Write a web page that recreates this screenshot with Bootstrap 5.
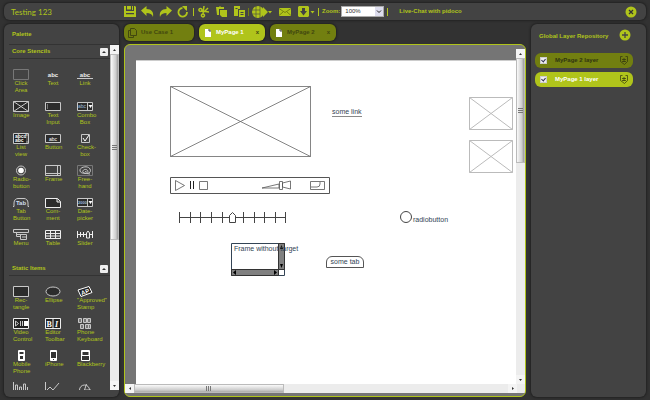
<!DOCTYPE html>
<html lang="en">
<head>
<meta charset="utf-8">
<meta name="viewport" content="width=device-width, initial-scale=1">
<title>Testing 123</title>
<link href="https://cdn.jsdelivr.net/npm/bootstrap@5.3.0/dist/css/bootstrap.min.css" rel="stylesheet">
<style>
:root{--lime:#b0c41b;--olive:#727f10;--panel:#434343}
body{font:6px/7px "Liberation Sans",Arial,sans-serif;background:#323232;color:var(--lime);padding:3px 4px;height:100vh;gap:4px;overflow:hidden}
button,select,input{font:inherit;color:inherit}
button{background:none;border:0;padding:0}
svg{display:block;fill:none;stroke:currentColor}
.panel{background:var(--panel);border-radius:6px;box-shadow:0 0 2px 1px #222}
.topbar{height:17px;padding:0 9px 0 7px}
.app-title{font:8px/10px Lato,sans-serif;width:113px}
.tools{gap:5px}
.tools-wide{gap:7px}
.tool svg{fill:currentColor;stroke:none}
.sep{width:1px;height:8px;background:var(--olive);margin:0 4px}
.sep.lit{background:var(--lime)}
.sep.tight{margin:0 3px}
.zoom-box{width:43px;height:11px;background:#fff;color:#333;border:1px solid #aaa;appearance:none;padding:0 3px}
.zoom-wrap{position:relative;margin-left:1px}
.zoom-wrap span{position:absolute;right:1px;top:1px;width:8px;height:9px;background:#dde;color:#222;pointer-events:none}
.chat{color:var(--lime);margin-left:8px}
.side{width:115px}
.palette-head{height:21px;padding:0 8px;margin-left:5px;padding-left:3px;border-bottom:1px solid #333}
.sect{height:14px;margin-left:5px;padding:0 2px 0 3px;border-bottom:1px solid #333}
.collapse-btn{width:8px;height:8px;background:#eee;border-radius:1px;color:#333}
.stencils{display:grid;grid-template-columns:repeat(3,16px);column-gap:16px;row-gap:7px;padding:10px 0 8px 9px}
.stencil{display:flex;flex-direction:column;justify-content:flex-start;width:16px;height:25px;text-align:center}
.stencil svg{flex:none;width:16px;height:11px;color:#c8c8c8}
.stencil span{display:block;width:16px}
.palette-body{margin-bottom:7px}
.vbar{width:9px;background:#ececec}
.arrow{width:9px;height:9px;color:#333;background:#f4f4f4}
.arrow svg,.collapse-btn svg{fill:currentColor;stroke:none}
.vthumb{background:linear-gradient(90deg,#fafafa,#ccc 70%,#999);border:1px solid #bbb}
.vthumb.t1{height:57%}
.vthumb.t2{height:33%}
.hbar{height:9px;background:#ececec}
.hthumb{width:40%;background:linear-gradient(#fafafa,#ccc 70%,#aaa);border:1px solid #bbb}
.grip{color:#777;width:5px;height:5px}
.workspace{gap:3px;margin:0 5px}
.page-tabs{gap:5px}
.page-tab{height:17px;width:66px;border-radius:6px;background:var(--olive);color:#42480f;padding:0 6px;box-shadow:0 0 2px 1px #222}
.page-tab.wide{width:70px;padding-left:4px}
.page-tab.active,.layer.active{background:var(--lime);color:#fff}
.page-tab .x{color:#42480f}
.board{background:#757575;border:1px solid var(--lime);border-radius:6px;padding-bottom:3px}
.view{padding:15px 0 0 11px}
.sheet{background:#fff;color:#345;font-size:7px;line-height:8px;border-top:1px solid #ccc}
.sheet>*{position:absolute}
.p-image{left:34px;top:25px}
.p-link{left:196px;top:47px;color:#345;text-decoration:none;border-bottom:1px solid #888}
.p-thumb1{left:333px;top:36px;color:#bbb}
.p-thumb2{left:333px;top:79px;color:#bbb}
.p-video{left:34px;top:116px}
.p-slider{left:43px;top:150px;color:#444}
.p-frame{left:95px;top:182px}
.p-frametext{left:98px;top:184px}
.p-tab{left:190px;top:195px;width:38px;height:12px;border:1px solid #555;border-radius:6px 6px 0 0}
.p-radio{left:264px;top:150px;gap:1px}
.p-radio input{appearance:none;width:12px;height:12px;border:1px solid #444;border-radius:50%;margin:0}
.p-radio span{padding-top:5px}
.layers-head{padding:5px 15px 0 8px;height:29px}
.layer-list{padding:0 13px 0 4px;gap:4px}
.layer{height:15px;border-radius:6px;background:var(--olive);color:#30340f;padding:0 5px}
.layer input{appearance:none;width:7px;height:7px;background:#eee;border:1px solid #ccc;margin:0;position:relative}
.layer input:checked::after{content:"";position:absolute;left:1px;top:0;width:3px;height:4px;border:solid #335;border-width:0 1px 1px 0;transform:rotate(40deg)}
.layer label{margin-left:8px}
.layer svg{color:#30340f}
</style>
</head>
<body class="d-flex flex-column">
<header class="panel topbar d-flex align-items-center flex-shrink-0">
  <div class="app-title flex-shrink-0">Testing 123</div>
  <div class="d-flex align-items-center tools">
    <button class="tool" aria-label="Save"><svg width="12" height="12" viewBox="0 0 12 12"><path fill-rule="evenodd" d="M0 0h2v5h8V0h1l1 1v10H0zM3 0h4v3.500H3zM8 0h1v4H8zM2 7v1.200h8V7z"/></svg></button>
    <button class="tool" aria-label="Undo"><svg width="13" height="12" viewBox="0 0 13 12"><path d="M0 4.500 5.500 0v3c5 0 7.500 3 6.500 8-1-3-3-4-6.500-4v3z"/></svg></button>
    <button class="tool" aria-label="Redo"><svg width="13" height="12" viewBox="0 0 13 12"><path d="M13 4.500 7.500 0v3C2.500 3 0 6 1 11c1-3 3-4 6.500-4v3z"/></svg></button>
    <button class="tool" aria-label="Refresh"><svg width="12" height="12" viewBox="0 0 12 12"><path d="M5.500 2a4.300 4.300 0 1 0 4.500 4" style="fill:none;stroke:currentColor;stroke-width:1.800"/><path d="M5 0h5v5L8.200 3.500z"/></svg></button>
  </div>
  <div class="sep lit"></div>
  <div class="d-flex align-items-center tools-wide">
    <button class="tool" aria-label="Cut"><svg width="11" height="12" viewBox="0 0 11 12"><path style="fill:none;stroke:currentColor;stroke-width:1.500" d="M2.500 5.500a1.500 1.500 0 1 0-.1 0zM5 11a1.500 1.500 0 1 0-.1 0zM3.500 5 11 6M5 8l1-8M6 6l4-4"/></svg></button>
    <button class="tool" aria-label="Copy"><svg width="11" height="12" viewBox="0 0 11 12"><path d="M0 1h3l1-1 1 1h3v2H3v6H1z"/><path d="M4 4h7v7H6L4 9z"/></svg></button>
    <button class="tool" aria-label="Paste"><svg width="11" height="12" viewBox="0 0 11 12"><path fill-rule="evenodd" d="M0 0h6v3H4v7H0zM1.500 2v1h2V2zM5 4h6v7H5zM6.500 6v1h3V6zM6.500 8v1h3V8z"/></svg></button>
  </div>
  <div class="sep tight"></div>
  <div class="d-flex align-items-center tools-wide">
    <button class="tool" aria-label="Publish"><svg width="20" height="12" viewBox="0 0 20 12"><circle cx="6" cy="6" r="6"/><path d="M8 3h3V1l5 5-5 5V9H8z"/><path d="M0 4h8M0 8h8M4 0v12M8 0v12" style="stroke:#434343;stroke-width:.6"/><path d="M16 5h4l-2 2.500z"/></svg></button>
    <button class="tool" aria-label="Mail"><svg width="12" height="8" viewBox="0 0 12 8"><path d="M0 0h12v8H0z"/><path d="m0 .5 6 4 6-4M0 7.500 4 4M12 7.500 8 4" style="fill:none;stroke:#68740f;stroke-width:.8"/></svg></button>
    <button class="tool" aria-label="Download"><svg width="17" height="12" viewBox="0 0 17 12"><path fill-rule="evenodd" d="M1 0h9l1 1v9l-1 1H1l-1-1V1zM4 2v3H2l3.500 4.500L9 5H7V2zM12.500 5h4l-2 2.500z"/></svg></button>
  </div>
  <div class="sep tight lit"></div>
  <label for="zoom" class="fw-bold">Zoom:</label>
  <div class="zoom-wrap"><select id="zoom" class="zoom-box d-block"><option>100%</option></select><span><svg width="8" height="9"><path d="m2 3.500 2 2 2-2"/></svg></span></div>
  <div class="sep tight lit"></div>
  <a href="#" class="chat fw-bold text-decoration-none">Live-Chat with pidoco</a>
  <button class="ms-auto" aria-label="Close"><svg width="12" height="12" viewBox="0 0 12 12"><circle cx="6" cy="6" r="5.500" fill="#b0c41b" stroke="none"/><path d="m4 4 4 4M8 4 4 8" stroke="#333" stroke-width="1.300"/></svg></button>
</header>

<div class="d-flex flex-grow-1 overflow-visible" style="min-height:0">
  <aside class="panel side d-flex flex-column flex-shrink-0">
    <div class="palette-head d-flex align-items-center fw-bold flex-shrink-0">Palette</div>
    <div class="palette-body d-flex flex-grow-1 overflow-hidden">
      <div class="flex-grow-1 overflow-hidden">
        <div class="sect d-flex align-items-center justify-content-between fw-bold">Core Stencils<button class="collapse-btn" aria-label="Collapse core stencils"><svg width="8" height="8"><path d="M2 5h4L4 3z"/></svg></button></div>
        <div class="stencils">
          <button class="stencil"><svg><path d="M.5.5h15v10H.5z" stroke="#777"/></svg><span>Click Area</span></button>
          <button class="stencil"><svg><text x="8" y="8" font-size="6" font-weight="bold" text-anchor="middle" fill="#eee" stroke="none">abc</text></svg><span>Text</span></button>
          <button class="stencil"><svg><text x="8" y="8" font-size="6" font-weight="bold" text-anchor="middle" fill="#eee" stroke="none">abc</text><path d="M0 9.500h16"/></svg><span>Link</span></button>
          <button class="stencil"><svg><path d="M.5.5h15v10H.5zl15 10M15.500.5l-15 10" fill="#2c2c2c"/></svg><span>Image</span></button>
          <button class="stencil"><svg><path d="M.5 1.500h15v8H.5z" fill="#2c2c2c"/><path d="M2.500 3v5" stroke="#777"/></svg><span>Text Input</span></button>
          <button class="stencil"><svg><path d="M.5 1.500h15v8H.5z" fill="#2c2c2c"/><text x="1" y="7" font-size="5" fill="#9bd" stroke="none">abc</text><path d="M10.500 1v9"/><path d="M11.500 4h4l-2 3z" fill="#fff" stroke="none"/></svg><span>Combo Box</span></button>
          <button class="stencil"><svg><path d="M.5.5h15v10H.5z" fill="#222"/><text x="2" y="5" font-size="5" font-weight="bold" fill="#fff" stroke="none">abcd</text><text x="2" y="9" font-size="5" font-weight="bold" fill="#fff" stroke="none">abc</text><path d="M14 0v11"/><path d="M14 3v5" stroke="#222"/></svg><span>List view</span></button>
          <button class="stencil"><svg><path d="M.5 1.500h15v8H.5z" fill="#2c2c2c"/><text x="8" y="8" font-size="5" text-anchor="middle" fill="#fff" stroke="none">abc</text></svg><span>Button</span></button>
          <button class="stencil"><svg><path d="M4.500 1.500h8v8h-8z"/><path d="m6 5 2 3 4-6" stroke="#fff"/></svg><span>Check-<br>box</span></button>
          <button class="stencil"><svg><circle cx="8" cy="5.500" r="4.500"/><circle cx="8" cy="5.500" r="2.800" fill="#fff" stroke="none"/></svg><span>Radio-<br>button</span></button>
          <button class="stencil"><svg><path d="M.5.5h15v10H.5zM12.500.5v10M.5 8.500h15"/></svg><span>Frame</span></button>
          <button class="stencil"><svg><path d="M.5.5h15v10H.5z" stroke="#777"/><path d="M3 6c-1-4 8-6 10-2s-3 5-6 4 0-5 3-3-1 3-2 1M3 6c1 3 5 2 10 3"/></svg><span>Free-<br>hand</span></button>
          <button class="stencil"><svg><path d="M0 9.500h1V6c0-3 2-4.500 4-4.500h6c2 0 4 1.500 4 4.500v3.500h1"/><text x="8" y="8" font-size="6" font-weight="bold" text-anchor="middle" fill="#cde" stroke="none">Tab</text></svg><span>Tab Button</span></button>
          <button class="stencil"><svg><path d="M.5 1.500h12l3 3v6H.5zM12 1.500V5h3.500" fill="#2c2c2c" stroke="#eee"/></svg><span>Com-<br>ment</span></button>
          <button class="stencil"><svg><path d="M.5 1.500h15v8H.5z" fill="#2c2c2c"/><text x="1" y="7" font-size="4" font-weight="bold" fill="#9bd" stroke="none">2000</text><path d="M10.500 1v9"/><path d="M11.500 4h4l-2 3z" fill="#fff" stroke="none"/></svg><span>Date-<br>picker</span></button>
          <button class="stencil"><svg><path d="M.5.500h15v3H.5zM3.500 3.500v4h4M3.500 5.500h5M7.500 5.500h6v5h-6zM9 8h4"/></svg><span>Menu</span></button>
          <button class="stencil"><svg><path d="M.5 1.500h15v8H.5zM.5 4.500h15M.5 7h15M5.500 1v9M10.500 1v9" stroke="#eee"/></svg><span>Table</span></button>
          <button class="stencil"><svg><path d="M.5 2v7M.5 5.500h9M3.500 3v5M6.500 3v5M9.500 9V4l1.500-2 1.500 2v5zM12.500 5.500h3M15.500 2v7" stroke="#eee"/></svg><span>Slider</span></button>
        </div>
        <div class="sect d-flex align-items-center justify-content-between fw-bold">Static Items<button class="collapse-btn" aria-label="Collapse static items"><svg width="8" height="8"><path d="M2 5h4L4 3z"/></svg></button></div>
        <div class="stencils">
          <button class="stencil"><svg><path d="M.5.5h15v10H.5z" fill="#2c2c2c"/></svg><span>Rec-<br>tangle</span></button>
          <button class="stencil"><svg><ellipse cx="8" cy="5.500" rx="7" ry="4.500" fill="#2c2c2c"/></svg><span>Ellipse</span></button>
          <button class="stencil"><svg><path d="m1 4 11-3.500 3 6-11 4z" fill="#222" stroke="#fff"/><text x="4" y="8" font-size="6" font-weight="bold" fill="#fff" stroke="none" transform="rotate(-18 8 6)">AP</text></svg><span>"Approved" Stamp</span></button>
          <button class="stencil"><svg><path d="M.5.5h15v10H.5z" fill="#222" stroke="#eee"/><path d="m2.500 3 3 2.500-3 2.500zM7.500 3v5M9.500 3v5"/><path d="M11 3h4v5h-4z" fill="#fff" stroke="none"/></svg><span>Video Control</span></button>
          <button class="stencil"><svg><path d="M.5.5h15v10H.5zM8 0v11" fill="#222" stroke="#eee"/><text x="1.500" y="9" font-family="Liberation Serif" font-size="8" font-weight="bold" fill="#fff" stroke="none">B</text><text x="10" y="9" font-family="Liberation Serif" font-size="8" font-style="italic" font-weight="bold" fill="#fff" stroke="none">I</text></svg><span>Editor Toolbar</span></button>
          <button class="stencil"><svg><path d="M1.500.5h3v4h-3zM6.500.5h3v4h-3zM10.500.5h3v4h-3zM3.500 6.500h3v4h-3zM8.500 6.500h3v4h-3zM11.500 6.500h2v4h-2z" fill="#777"/></svg><span>Phone Keyboard</span></button>
          <button class="stencil"><svg><rect x="5" y="0" width="7" height="11" rx="1" fill="#fff" stroke="none"/><path d="M6.500 2h4v2h-4zM7 6h3v3H7z" fill="#333" stroke="none"/></svg><span>Mobile Phone</span></button>
          <button class="stencil"><svg><rect x="5" y="0" width="7" height="11" rx="1" fill="#fff" stroke="none"/><path d="M6 2h5v6H6zM8 9h1v1H8z" fill="#333" stroke="none"/></svg><span>iPhone</span></button>
          <button class="stencil"><svg><rect x="4" y="0" width="9" height="11" rx="1" fill="#fff" stroke="none"/><path d="M5.500 2h6v3h-6zM5 6h7v4H5z" fill="#333" stroke="none"/></svg><span>Blackberry</span></button>
          <button class="stencil" aria-label="Bar chart"><svg><path d="M.5 0v11M2.500 11V3h2v8M6.500 11V5h2v6M10.500 11V2h2v9M14.500 11V5"/></svg></button>
          <button class="stencil" aria-label="Line chart"><svg><path d="M.5 0v11M2 8l3-3 3 3 6-7"/></svg></button>
          <button class="stencil" aria-label="Gauge"><svg><path d="M2.500 8a5 5 0 1 1 10 0M7.500 8l2-6M7 8h7"/></svg></button>
        </div>
      </div>
      <div class="vbar d-flex flex-column flex-shrink-0">
        <div class="arrow flex-shrink-0"><svg width="9" height="9"><path d="M3 6h3L4.500 4z"/></svg></div>
        <div class="flex-grow-1"><div class="vthumb t1 d-flex align-items-center justify-content-center"><svg class="grip"><path d="M0 .5h5M0 2.500h5M0 4.500h5"/></svg></div></div>
        <div class="arrow flex-shrink-0"><svg width="9" height="9"><path d="M3 4h3L4.500 6z"/></svg></div>
      </div>
    </div>
  </aside>

  <main class="workspace d-flex flex-column flex-grow-1">
    <nav class="page-tabs d-flex fw-bold flex-shrink-0">
      <button class="page-tab wide d-flex align-items-center"><svg class="me-1" width="9" height="10"><path d="M2.500 2.500h-2v7h5v-2M2.500.5h4l2 2v5h-6z"/></svg>Use Case 1</button>
      <button class="page-tab active d-flex align-items-center"><svg class="me-1" width="7" height="8"><path d="M0 0h4l2 2v6H0z" fill="#fff" stroke="none"/><path d="M4 0v2h2" stroke="#444"/></svg>MyPage 1<span class="x ms-auto">x</span></button>
      <button class="page-tab d-flex align-items-center"><svg class="me-1" width="7" height="8"><path d="M0 0h4l2 2v6H0z" fill="#fff" stroke="none"/><path d="M4 0v2h2" stroke="#444"/></svg>MyPage 2<span class="x ms-auto">x</span></button>
    </nav>
    <div class="board d-flex flex-column flex-grow-1 overflow-hidden">
      <div class="d-flex flex-grow-1">
        <div class="view d-flex flex-grow-1">
          <div class="sheet position-relative flex-grow-1">
            <svg class="p-image" width="142" height="71"><path d="M.5.5h140v70H.5zl140 70M140.500.5l-140 70" stroke="#666" stroke-width=".8"/></svg>
            <a href="#" class="p-link">some link</a>
            <svg class="p-thumb1" width="44" height="33"><path d="M.5.5h43v32H.5zl43 32M43.500.5l-43 32"/></svg>
            <svg class="p-thumb2" width="44" height="33"><path d="M.5.5h43v32H.5zl43 32M43.500.5l-43 32"/></svg>
            <svg class="p-video" width="160" height="17"><path d="M.5.5h159v16H.5z" stroke="#555"/><path d="m5.500 3.500 9 5-9 5zM29.500 4.500h8v8h-8zM92 11l17-4v4zM109.500 4.500h3v8h-3zM112.500 6l8-2v8l-8-2zM140.500 4.500h14v8h-14zM141 10h6q3 0 3-3V5" stroke="#555" stroke-width=".8"/><path d="M20.500 4v8M23.500 4v8" stroke="#222"/></svg>
            <svg class="p-slider" width="108" height="13"><path d="M.5 6.500h106M.5 1v11M11.500 1v11M21.500 1v11M32.500 1v11M43.500 1v11M64.500 1v11M75.500 1v11M85.500 1v11M96.500 1v11M106.500 1v11"/><path d="M50.500 11.500v-7l3-3 3 3v7z" fill="#fff"/></svg>
            <svg class="p-frame" width="55" height="33"><path d="M.5.5h53v32H.5z"/><path d="M47.500.5h6v26h-6zM.5 26.500h47v6H.5z" fill="#808080" stroke="#333"/><path d="M49 6h3l-1.500-4zM49 21h3l-1.500 4zM5 27v5l-3-2.500zM43 27v5l3-2.500z" fill="#000" stroke="none"/></svg>
            <span class="p-frametext text-nowrap">Frame without target</span>
            <button class="p-tab">some tab</button>
            <label class="p-radio d-flex"><input type="radio"><span>radiobutton</span></label>
          </div>
        </div>
        <div class="vbar d-flex flex-column flex-shrink-0 mt-1">
          <div class="arrow flex-shrink-0"><svg width="9" height="9"><path d="M3 6h3L4.500 4z"/></svg></div>
          <div class="flex-grow-1"><div class="vthumb t2 d-flex align-items-center justify-content-center"><svg class="grip"><path d="M0 .5h5M0 2.500h5M0 4.500h5"/></svg></div></div>
          <div class="arrow flex-shrink-0"><svg width="9" height="9"><path d="M3 4h3L4.500 6z"/></svg></div>
        </div>
      </div>
      <div class="hbar d-flex flex-shrink-0 pe-2">
        <div class="arrow"><svg width="9" height="9"><path d="M6 3v3L4 4.500z"/></svg></div>
        <div class="flex-grow-1 d-flex"><div class="hthumb d-flex align-items-center justify-content-center"><svg class="grip"><path d="M.5 0v5M2.500 0v5M4.500 0v5"/></svg></div></div>
        <div class="arrow"><svg width="9" height="9"><path d="M4 3v3l2-1.500z"/></svg></div>
      </div>
    </div>
  </main>

  <aside class="panel side flex-shrink-0">
    <div class="layers-head d-flex justify-content-between align-items-start fw-bold"><span class="pt-1">Global Layer Repository</span><button aria-label="Add layer"><svg width="12" height="12"><circle cx="6" cy="6" r="5.500" fill="#b0c41b" stroke="none"/><path d="M3 6h6M6 3v6" stroke="#444" stroke-width="1.300"/></svg></button></div>
    <div class="layer-list d-flex flex-column fw-bold">
      <div class="layer d-flex align-items-center"><input type="checkbox" id="l2" checked><label for="l2">MyPage 2 layer</label><svg class="ms-auto" width="8" height="9"><path d="M.5.5h2M5.500.5h2v5l-3 3-4-3v-5M2 3.500h4M2 5.500h4M4 2v4" stroke-width=".7"/></svg></div>
      <div class="layer active d-flex align-items-center"><input type="checkbox" id="l1" checked><label for="l1">MyPage 1 layer</label><svg class="ms-auto" width="8" height="9"><path d="M.5.5h2M5.500.5h2v5l-3 3-4-3v-5M2 3.500h4M2 5.500h4M4 2v4" stroke-width=".7"/></svg></div>
    </div>
  </aside>
</div>
<script src="https://cdn.jsdelivr.net/npm/bootstrap@5.3.0/dist/js/bootstrap.bundle.min.js"></script>
</body>
</html>
